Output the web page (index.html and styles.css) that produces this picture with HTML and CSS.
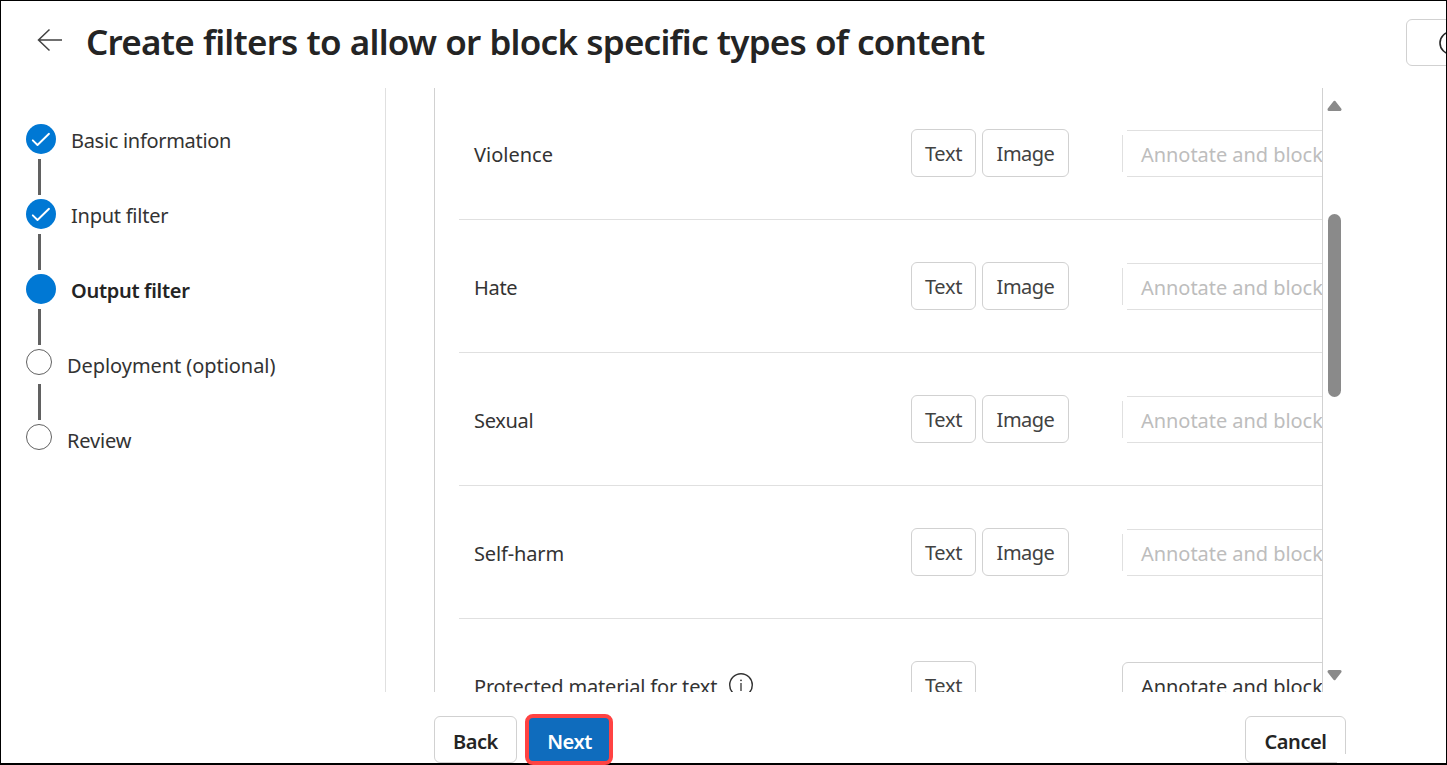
FILE: index.html
```html
<!DOCTYPE html>
<html lang="en">
<head>
<meta charset="utf-8">
<title>Create filters</title>
<link rel="stylesheet" href="styles.css">
</head>
<body>
<div class="page">
  <header class="header">
    <svg class="back-arrow" width="26" height="24" viewBox="0 0 26 24"><path d="M12.5 1.5 1.5 12l11 10.500M1.500 12H25" fill="none" stroke="#424242" stroke-width="1.500"/></svg>
    <h1 class="title">Create filters to allow or block specific types of content</h1>
    <div class="help-button"><svg width="24" height="24" viewBox="0 0 24 24"><circle cx="12" cy="12" r="11" fill="none" stroke="#242424" stroke-width="1.600"/></svg></div>
  </header>
  <div class="body">
    <nav class="steps">
      <div class="step"><span class="dot filled"><svg width="30" height="30" viewBox="0 0 30 30"><path d="M6.800 16.300l4.700 4.700L23 9.800" fill="none" stroke="#fff" stroke-width="1.900" stroke-linecap="round" stroke-linejoin="round"/></svg></span><span class="label basic">Basic information</span></div>
      <div class="step"><span class="dot filled"><svg width="30" height="30" viewBox="0 0 30 30"><path d="M6.800 16.300l4.700 4.700L23 9.800" fill="none" stroke="#fff" stroke-width="1.900" stroke-linecap="round" stroke-linejoin="round"/></svg></span><span class="label input">Input filter</span></div>
      <div class="step"><span class="dot filled"></span><span class="label current">Output filter</span></div>
      <div class="step"><span class="dot"></span><span class="label deploy">Deployment (optional)</span></div>
      <div class="step"><span class="dot"></span><span class="label review">Review</span></div>
    </nav>
    <main class="panel">
      <div class="row"><span class="name violence">Violence</span><div class="tags"><span class="tag text">Text</span><span class="tag image">Image</span></div><div class="select disabled"><span>Annotate and block</span></div></div>
      <div class="row"><span class="name hate">Hate</span><div class="tags"><span class="tag text">Text</span><span class="tag image">Image</span></div><div class="select disabled"><span>Annotate and block</span></div></div>
      <div class="row"><span class="name sexual">Sexual</span><div class="tags"><span class="tag text">Text</span><span class="tag image">Image</span></div><div class="select disabled"><span>Annotate and block</span></div></div>
      <div class="row"><span class="name harm">Self-harm</span><div class="tags"><span class="tag text">Text</span><span class="tag image">Image</span></div><div class="select disabled"><span>Annotate and block</span></div></div>
      <div class="row"><span class="name protected"><span>Protected material for text</span><svg width="24" height="24" viewBox="0 0 24 24"><circle cx="12" cy="12" r="11.300" fill="none" stroke="#333" stroke-width="1.400"/><path d="M12 10v8" stroke="#333" stroke-width="1.300"/><circle cx="12" cy="7.300" r=".9" fill="#333"/></svg></span><div class="tags"><span class="tag text">Text</span></div><div class="select"><span>Annotate and block</span></div></div>
    </main>
    <div class="scrollbar">
      <svg width="15" height="12" viewBox="0 0 15 12"><path d="M7.500 2.300 13 9.500H2Z" fill="#8a8a8a" stroke="#8a8a8a" stroke-width="3" stroke-linejoin="round"/></svg>
      <div class="thumb"></div>
      <svg class="down" width="15" height="12" viewBox="0 0 15 12"><path d="M7.500 9.700 13 2.500H2Z" fill="#8a8a8a" stroke="#8a8a8a" stroke-width="3" stroke-linejoin="round"/></svg>
    </div>
  </div>
  <footer class="footer">
    <div class="btn back"><span>Back</span></div>
    <div class="btn next"><span>Next</span></div>
    <div class="btn cancel"><span>Cancel</span></div>
  </footer>
</div>
</body>
</html>
```
FILE: styles.css
```css
* { box-sizing: border-box; }
body { margin: 0; background: #fff; font-family: "Noto Sans", "Open Sans", sans-serif; font-size: 20px; color: #333; overflow: hidden; }
.page { width: 1447px; height: 765px; border: 1px solid #000; border-bottom-width: 2px; display: flex; flex-direction: column; overflow: clip; overflow-clip-margin: 2px; }
.header { height: 87px; flex: none; display: flex; align-items: flex-start; padding-left: 36px; overflow: hidden; }
.back-arrow { margin-top: 27px; flex: none; }
.title { margin: 14px 0 0 23px; width: 1320px; flex: none; font-size: 35px; font-weight: 600; line-height: 54px; letter-spacing: -0.75px; word-spacing: 0.6px; color: #242424; white-space: nowrap; }
.help-button { margin-top: 18px; width: 90px; height: 47px; flex: none; border: 1px solid #d1d1d1; border-radius: 6px; display: flex; align-items: center; padding-left: 32px; }
.body { height: 604px; flex: none; display: flex; }
.steps { width: 385px; flex: none; border-right: 1px solid #e0e0e0; padding: 36px 0 0 25px; display: flex; flex-direction: column; }
.step { height: 75px; display: grid; grid-template-columns: auto 1fr; grid-template-rows: 30px 1fr; align-items: start; }
.step:not(:last-child)::after { content: ""; grid-row: 2; width: 3px; height: 36px; margin: 5px 0 0 12px; background: #616161; }
.dot { width: 26px; height: 26px; border: 1px solid #616161; border-radius: 50%; grid-row: 1; }
.dot.filled { width: 30px; height: 30px; border: 0; background: #0078d4; }
.dot svg { display: block; }
.label { grid-row: 1; line-height: 30px; margin: 2px 0 0 15px; white-space: nowrap; }
.basic { letter-spacing: -0.3px; }
.input { letter-spacing: -0.25px; }
.deploy { letter-spacing: -0.06px; }
.review { letter-spacing: -0.15px; }
.current { font-weight: 600; letter-spacing: -0.3px; color: #242424; }
.panel { width: 889px; flex: none; margin-left: 48px; border: solid #d1d1d1; border-width: 0 1px; padding-left: 24px; overflow: hidden; }
.row { height: 133px; display: grid; grid-template-columns: 452px 211px 250px; align-items: start; padding-top: 42px; border-bottom: 1px solid #e0e0e0; }
.row:first-child { margin-top: -1px; }
.name { padding-left: 15px; line-height: 52px; white-space: nowrap; }
.hate, .sexual { letter-spacing: -0.3px; }
.harm { letter-spacing: -0.15px; }
.protected { display: flex; gap: 12px; letter-spacing: -0.17px; }
.protected svg { margin-top: 12px; }
.tags { display: flex; gap: 6px; }
.tag { height: 48px; border: 1px solid #d1d1d1; border-radius: 6px; line-height: 48px; text-align: center; color: #424242; }
.text { width: 65px; letter-spacing: -0.3px; }
.image { width: 87px; letter-spacing: -0.5px; }
.select { height: 47px; margin-top: 1px; border: 1px solid #d1d1d1; border-radius: 6px; padding-left: 18px; line-height: 47px; letter-spacing: -0.05px; white-space: nowrap; }
.disabled { color: #bdbdbd; border: 0; border-radius: 0; padding-left: 19px; line-height: 49px; background: linear-gradient(#e0e0e0, #e0e0e0) 5px 0 / 100% 1px no-repeat, linear-gradient(#e0e0e0, #e0e0e0) 5px 100% / 100% 1px no-repeat, linear-gradient(#e0e0e0, #e0e0e0) 0 5px / 1px 37px no-repeat; }
.scrollbar { width: 19px; padding: 12px 0 0 4px; }
.scrollbar svg { display: block; }
.thumb { width: 13px; height: 183px; margin: 102px 0 0 1px; border-radius: 7px; background: #8a8a8a; }
.down { margin-top: 272px; }
.footer { height: 73px; flex: none; display: flex; align-items: flex-start; padding: 22px 0 0 433px; }
.btn { border: 1px solid #d1d1d1; border-radius: 6px; height: 47px; margin-top: 2px; font-weight: 600; letter-spacing: -0.45px; color: #242424; text-align: center; line-height: 49px; }
.back { width: 83px; }
.next { position: relative; width: 88px; height: 51px; margin: 0 0 0 8px; border: 4px solid #ff4343; border-radius: 8px; background: #0f6cbd; color: #fff; line-height: 47px; padding-left: 1px; }
.cancel { width: 101px; margin-left: 632px; clip-path: polygon(0 0, 100% 0, 100% 38px, 92px 38px, 92px 100%, 0 100%); }
```
